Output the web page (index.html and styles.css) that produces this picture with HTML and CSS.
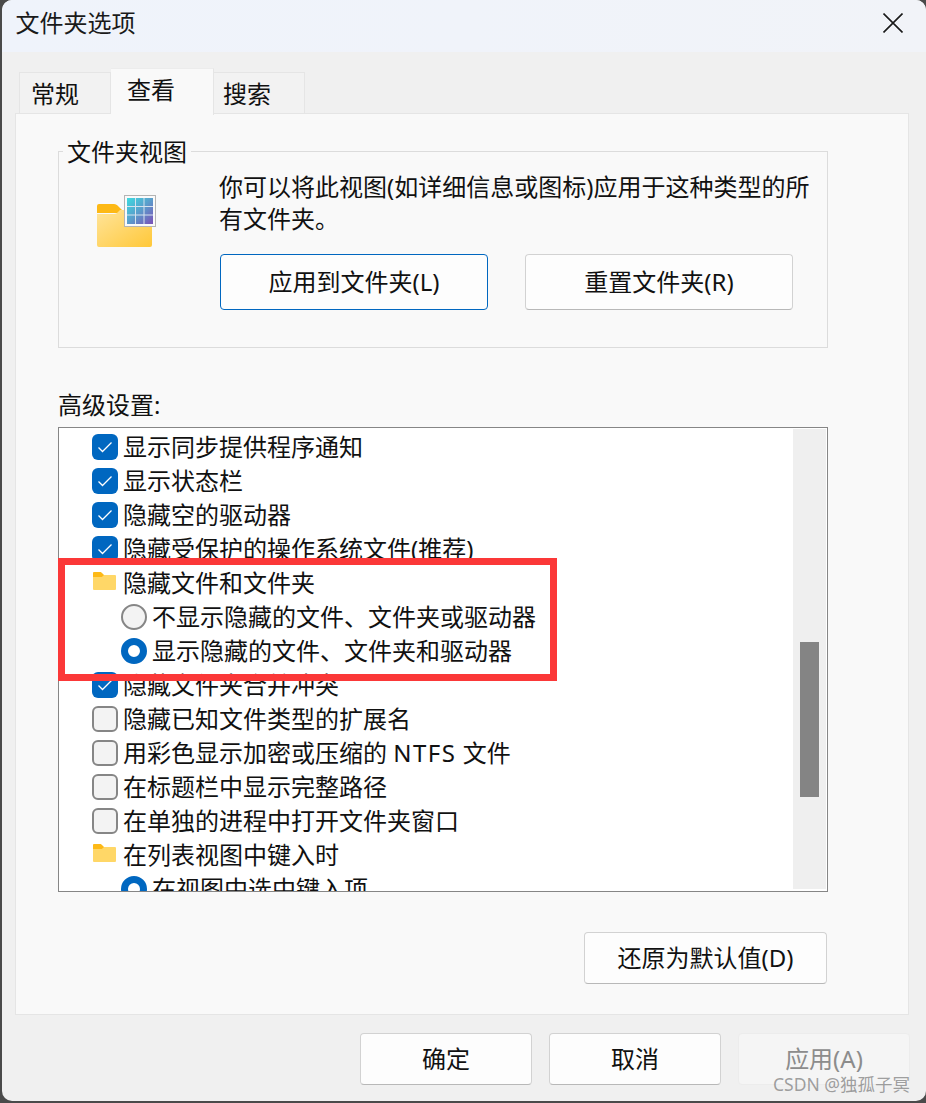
FILE: index.html
```html
<!DOCTYPE html>
<html lang="zh-CN">
<head>
<meta charset="utf-8">
<title>文件夹选项</title>
<link rel="stylesheet" href="styles.css">
</head>
<body>
<div class="window">
  <header class="titlebar">
    <span class="title">文件夹选项</span>
    <svg class="close" width="20" height="20" viewBox="0 0 20 20"><path d="M0.5 0.5L19.5 19.5M19.5 0.5L0.5 19.5" fill="none" stroke="#1a1a1a" stroke-width="1.6"/></svg>
  </header>
  <main class="main">
    <nav class="tabs">
      <div class="tab">常规</div>
      <div class="tab tab-active">查看</div>
      <div class="tab tab-last">搜索</div>
    </nav>
    <section class="panel">
      <div class="group">
        <span class="legend">文件夹视图</span>
        <div class="group-icon">
          <svg width="60" height="53" viewBox="0 0 60 53">
            <defs>
              <linearGradient id="fb" x1="0" y1="0" x2="1" y2="1"><stop offset="0" stop-color="#ffe49a"/><stop offset="1" stop-color="#ffc839"/></linearGradient>
              <linearGradient id="gc" x1="0" y1="0" x2="1" y2="1"><stop offset="0" stop-color="#3ddbe0"/><stop offset=".5" stop-color="#5b9dcb"/><stop offset="1" stop-color="#7b4fb8"/></linearGradient>
            </defs>
            <path d="M1 11a2 2 0 0 1 2-2h15c2 0 3 1 4 2l5 5v2H1z" fill="#fdb916"/>
            <path d="M1 19l17 0c2 0 3-1 4-2l2-2h30a2 2 0 0 1 2 2v33a2 2 0 0 1-2 2H3a2 2 0 0 1-2-2z" fill="url(#fb)"/>
            <rect x="28.500" y="0.500" width="31" height="31" fill="#fafafa" stroke="#b4b4b4"/>
            <rect x="31" y="3" width="26" height="26" fill="url(#gc)"/>
            <path d="M39.500 3v26M48 3v26M31 11.500h26M31 20h26" stroke="#d5e2ee" stroke-width="1"/>
          </svg>
        </div>
        <div class="group-body">
          <p class="group-text">你可以将此视图(如详细信息或图标)应用于这种类型的所<br>有文件夹。</p>
          <div class="group-buttons">
            <button class="btn btn-wide btn-focus">应用到文件夹(L)</button>
            <button class="btn btn-wide">重置文件夹(R)</button>
          </div>
        </div>
      </div>
      <div class="list-label">高级设置:</div>
      <div class="list">
        <div class="rows">
          <div class="row"><span class="check on"><svg width="16" height="12" viewBox="0 0 16 12"><path d="M1.500 6.500L5.500 10.500L14.500 1.500" fill="none" stroke="#fff" stroke-width="1.300"/></svg></span>显示同步提供程序通知</div>
          <div class="row"><span class="check on"><svg width="16" height="12" viewBox="0 0 16 12"><path d="M1.500 6.500L5.500 10.500L14.500 1.500" fill="none" stroke="#fff" stroke-width="1.300"/></svg></span>显示状态栏</div>
          <div class="row"><span class="check on"><svg width="16" height="12" viewBox="0 0 16 12"><path d="M1.500 6.500L5.500 10.500L14.500 1.500" fill="none" stroke="#fff" stroke-width="1.300"/></svg></span>隐藏空的驱动器</div>
          <div class="row"><span class="check on"><svg width="16" height="12" viewBox="0 0 16 12"><path d="M1.500 6.500L5.500 10.500L14.500 1.500" fill="none" stroke="#fff" stroke-width="1.300"/></svg></span>隐藏受保护的操作系统文件(推荐)</div>
          <div class="row"><svg class="mini-folder" width="26" height="26" viewBox="0 0 26 26"><path d="M1 6a1 1 0 0 1 1-1h6c1 0 1.500.5 2 1l2 2v2H1z" fill="#fdb916"/><path d="M1 10h8c1 0 1.500-.5 2-1l1-1h11a1 1 0 0 1 1 1v13a1 1 0 0 1-1 1H2a1 1 0 0 1-1-1z" fill="#ffd767"/></svg>隐藏文件和文件夹</div>
          <div class="row row-sub"><span class="radio"></span>不显示隐藏的文件、文件夹或驱动器</div>
          <div class="row row-sub"><span class="radio on"></span>显示隐藏的文件、文件夹和驱动器</div>
          <div class="row"><span class="check on"><svg width="16" height="12" viewBox="0 0 16 12"><path d="M1.500 6.500L5.500 10.500L14.500 1.500" fill="none" stroke="#fff" stroke-width="1.300"/></svg></span>隐藏文件夹合并冲突</div>
          <div class="row"><span class="check"></span>隐藏已知文件类型的扩展名</div>
          <div class="row"><span class="check"></span><span>用彩色显示加密或压缩的 <span class="latin">NTFS</span> 文件</span></div>
          <div class="row"><span class="check"></span>在标题栏中显示完整路径</div>
          <div class="row"><span class="check"></span>在单独的进程中打开文件夹窗口</div>
          <div class="row"><svg class="mini-folder" width="26" height="26" viewBox="0 0 26 26"><path d="M1 6a1 1 0 0 1 1-1h6c1 0 1.500.5 2 1l2 2v2H1z" fill="#fdb916"/><path d="M1 10h8c1 0 1.500-.5 2-1l1-1h11a1 1 0 0 1 1 1v13a1 1 0 0 1-1 1H2a1 1 0 0 1-1-1z" fill="#ffd767"/></svg>在列表视图中键入时</div>
          <div class="row row-sub"><span class="radio on"></span>在视图中选中键入项</div>
        </div>
        <div class="scrollbar"><div class="thumb"></div></div>
      </div>
      <div class="restore-bar"><button class="btn btn-restore">还原为默认值(D)</button></div>
    </section>
    <footer class="footer">
      <button class="btn btn-foot">确定</button>
      <button class="btn btn-foot">取消</button>
      <button class="btn btn-foot btn-disabled">应用(A)</button>
    </footer>
  </main>
  <div class="highlight"></div>
  <div class="watermark">CSDN @独孤子冥</div>
</div>
</body>
</html>
```
FILE: styles.css
```css
* { box-sizing: border-box; }
html, body { margin: 0; padding: 0; }
body {
  width: 926px;
  height: 1103px;
  overflow: hidden;
  background: #4a4a4a;
  font-family: "Noto Sans", "Noto Sans CJK SC", sans-serif;
  font-size: 24px;
  line-height: 32px;
  color: #111;
}
.window {
  position: relative;
  display: flex;
  flex-direction: column;
  width: 924px;
  height: 1101px;
  margin-left: 2px;
  overflow: hidden;
  border-radius: 10px;
  background: #f0f0f0;
}
.titlebar {
  display: flex;
  flex: none;
  align-items: center;
  justify-content: space-between;
  height: 52px;
  padding: 0 21px 6px 13.500px;
  background: linear-gradient(90deg, #eff3fb, #f0f3fa 50%, #f1f3f8);
}
.title { color: #1a1a1a; }
.close { margin: 0 2px 1px 0; }
.main { display: flex; flex: 1; flex-direction: column; padding-left: 13px; }
.tabs { display: flex; flex: none; align-items: flex-end; height: 61px; padding: 16px 0 0 4px; }
.tab {
  width: 92px;
  height: 42px;
  margin-bottom: -1px;
  padding: 5px 0 0 11px;
  border: 1px solid #e5e5e5;
  border-bottom: none;
  background: #f2f2f2;
}
.tab + .tab { border-left: none; }
.tab-active {
  position: relative;
  z-index: 1;
  width: 103px;
  height: 47px;
  margin-bottom: -2px;
  padding: 5px 0 0 16px;
  border-top-color: #ececec;
  background: #f9f9f9;
}
.tab-last { width: 91px; padding-left: 9px; }
.panel {
  width: 894px;
  height: 902px;
  padding: 37px 0 0 42px;
  border: 1px solid #e5e5e5;
  background: #f9f9f9;
}
.group {
  position: relative;
  display: flex;
  width: 770px;
  height: 197px;
  border: 1px solid #dcdcdc;
}
.legend {
  position: absolute;
  top: -16px;
  left: 4px;
  padding: 0 4px;
  background: #f9f9f9;
}
.group-icon { flex: none; width: 160px; padding: 43px 0 0 37px; }
.group-body { padding-top: 19px; }
.group-text { margin: 0 0 19px; white-space: nowrap; }
.group-buttons { display: flex; gap: 37px; margin-left: 1px; }
.btn {
  border: 1px solid #d2d2d2;
  border-bottom-color: #b8b8b8;
  border-radius: 4px;
  background: #fdfdfd;
  color: #111;
  font: inherit;
  padding: 0;
}
.btn-wide { width: 268px; height: 56px; }
.btn-focus { border: 1.500px solid #0067c0; }
.list-label { margin-top: 41px; height: 38px; }
.list {
  display: flex;
  width: 770px;
  height: 465px;
  overflow: hidden;
  border: 1px solid #868686;
  background: #fff;
}
.rows { flex: 1; padding-top: 2px; }
.row { display: flex; align-items: center; gap: 5px; height: 34px; padding-left: 33px; white-space: nowrap; }
.row-sub { padding-left: 62px; }
.latin { letter-spacing: 1.500px; }
.check {
  display: flex;
  flex: none;
  align-items: center;
  justify-content: center;
  width: 26px;
  height: 26px;
  border: 2px solid #868686;
  border-radius: 6px;
  background: #f3f3f3;
}
.check.on { border: none; background: #0067c0; }
.radio {
  flex: none;
  width: 26px;
  height: 26px;
  border: 2px solid #868686;
  border-radius: 50%;
  background: #f3f3f3;
}
.radio.on { border: 7px solid #0067c0; background: #fff; }
.mini-folder { flex: none; margin-top: -6px; }
.scrollbar {
  flex: none;
  width: 33px;
  margin: 1px 1px 2px 0;
  padding: 213px 0 0 7px;
  background: #efefef;
}
.thumb { width: 19px; height: 155px; background: #848484; }
.restore-bar { display: flex; justify-content: flex-end; width: 769px; margin-top: 40px; }
.btn-restore { width: 243px; height: 52px; }
.footer { display: flex; flex: none; justify-content: flex-end; gap: 17px; padding: 18px 16px 0 0; }
.btn-foot { width: 172px; height: 52px; }
.btn-disabled { border-color: #ececec; background: #f5f5f5; color: #8c8c8c; }
.highlight {
  position: absolute;
  top: 558px;
  left: 56px;
  width: 499px;
  height: 123px;
  border: 7px solid #fb3838;
}
.watermark {
  position: absolute;
  top: 1071px;
  right: 16px;
  color: rgba(120, 120, 120, .7);
  font-size: 17.5px;
  line-height: 26px;
}
```
